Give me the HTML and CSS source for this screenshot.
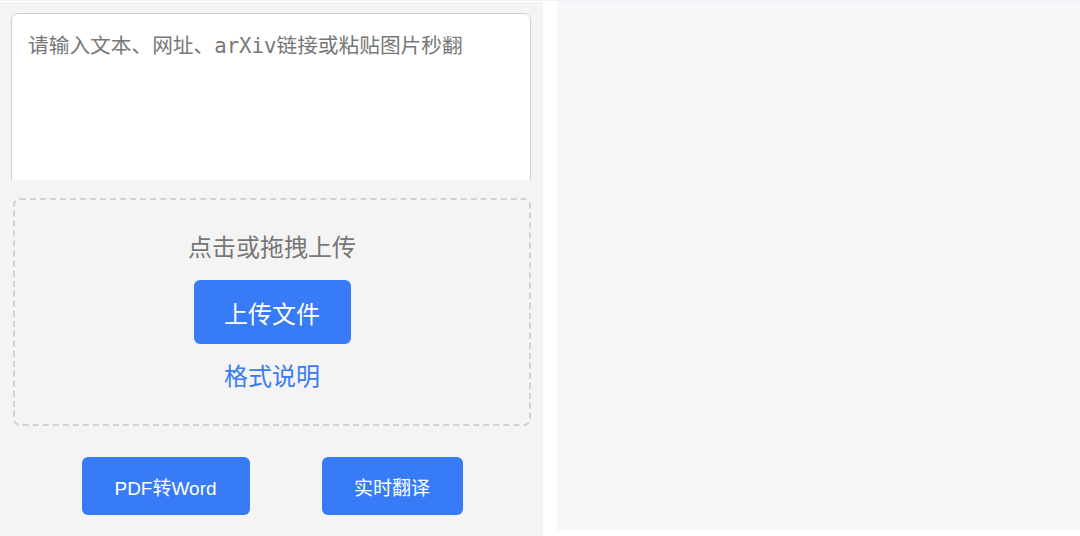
FILE: index.html
```html
<!DOCTYPE html>
<html lang="zh-CN">
<head>
  <meta charset="UTF-8" />
  <meta name="viewport" content="width=device-width, initial-scale=1.0" />
  <title>翻译</title>
  <link rel="stylesheet" href="styles.css">
</head>
<body>
  <div class="page">
    <!-- 左侧输入区 -->
    <div class="left-panel">
      <div class="input-box">
        <textarea class="input-text" placeholder="请输入文本、网址、arXiv链接或粘贴图片秒翻"></textarea>
      </div>

      <div class="upload-area">
        <div class="upload-box">
          <div class="upload-hint">点击或拖拽上传</div>
          <button class="upload-btn">上传文件</button>
          <a class="format-link" href="#">格式说明</a>
        </div>
      </div>

      <div class="tool-buttons">
        <button class="tool-btn pdf-btn">PDF转Word</button>
        <button class="tool-btn live-btn">实时翻译</button>
      </div>
    </div>

    <!-- 右侧结果区 -->
    <div class="right-panel"></div>
  </div>
</body>
</html>
```

FILE: styles.css
```css
html, body {
  margin: 0;
  padding: 0;
  background-color: #fff;
}

body {
  font-family: "Liberation Sans", "Noto Sans CJK SC", sans-serif;
  border-top: 1px solid #f0f0f7;
  height: 535px;
  overflow: hidden;
}

.page {
  display: flex;
  align-items: flex-start;
  height: 100%;
}

.left-panel {
  width: 543px;
  height: 534px;
  margin-top: 1px;
  background-color: #f4f4f4;
  padding-top: 11px;
  box-sizing: border-box;
}

.input-box {
  margin-left: 11px;
  width: 520px;
  height: 167px;
  overflow: hidden;
}

.input-text {
  display: block;
  width: 100%;
  height: 200px;
  box-sizing: border-box;
  border: 1px solid #cfcfcf;
  border-radius: 7px;
  background-color: #fff;
  padding: 17px 16px;
  font-family: "DejaVu Sans Mono", "Noto Sans CJK SC", monospace;
  font-size: 20.7px;
  line-height: 30px;
  resize: none;
  outline: none;
}

.input-text::placeholder {
  color: #777;
}

.upload-area {
  padding: 18px 0 0 13px;
}

.upload-box {
  width: 518px;
  height: 228px;
  box-sizing: border-box;
  border: 2px dashed #d2d2d2;
  border-radius: 7px;
  display: flex;
  flex-direction: column;
  align-items: center;
  padding-top: 33px;
}

.upload-hint {
  color: #777;
  font-size: 24px;
  line-height: 30px;
}

.upload-btn {
  margin-top: 17px;
  width: 157px;
  height: 64px;
  border: none;
  border-radius: 6px;
  background-color: #387bf6;
  color: #fff;
  font-family: inherit;
  font-size: 24px;
  cursor: pointer;
}

.format-link {
  margin-top: 18px;
  color: #387bf6;
  font-size: 24px;
  line-height: 30px;
  text-decoration: none;
}

.tool-buttons {
  display: flex;
  justify-content: center;
  gap: 72px;
  margin-top: 31px;
  padding-left: 1px;
}

.tool-btn {
  height: 58px;
  border: none;
  border-radius: 6px;
  background-color: #387bf6;
  color: #fff;
  font-family: inherit;
  font-size: 19px;
  cursor: pointer;
}

.pdf-btn {
  width: 168px;
}

.live-btn {
  width: 141px;
}

.right-panel {
  margin-left: 14px;
  flex: 1;
  height: 529px;
  background-color: #f7f7f9;
}
```
